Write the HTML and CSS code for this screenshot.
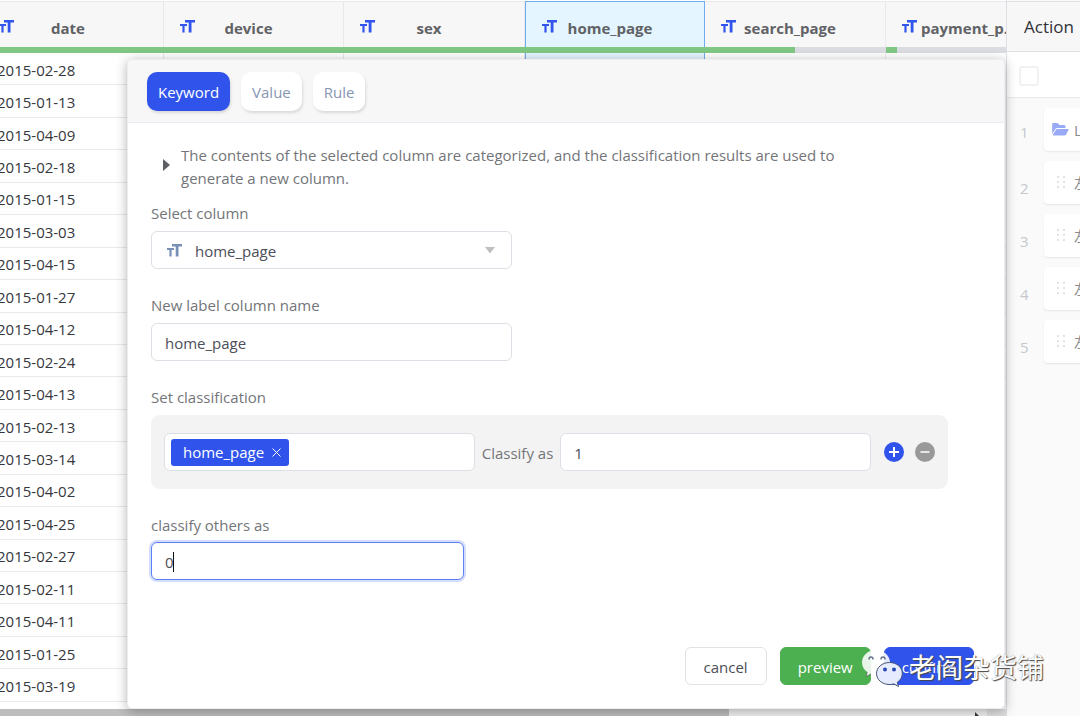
FILE: index.html
```
<!DOCTYPE html>
<html lang="en">
<head>
<meta charset="utf-8">
<title>Column classification</title>
<link rel="stylesheet" href="styles.css">
</head>
<body>
<svg class="sprite" aria-hidden="true">
  <symbol id="type-icon" viewBox="0 0 15 13"><path d="M0 4h7v2H4.600v6.500H2.400V6H0zM5 0h10v2.600h-3.500v9.900H8.700V2.600H5z" fill="currentColor"/></symbol>
  <symbol id="grip-icon" viewBox="0 0 9 13"><path d="M0 0h2v2H0zM6 0h2v2H6zM0 5h2v2H0zM6 5h2v2H6zM0 10h2v2H0zM6 10h2v2H6z" fill="currentColor"/></symbol>
</svg>
<div class="app">
  <main class="sheet">
    <div class="sheet-view">
      <table class="grid">
        <colgroup><col class="wide"><col><col class="wide"><col><col class="wide"><col></colgroup>
        <thead><tr>
          <th><div class="head"><svg class="type"><use href="#type-icon"/></svg><span>date</span></div><div class="bar full"></div></th>
          <th><div class="head"><svg class="type"><use href="#type-icon"/></svg><span>device</span></div><div class="bar full"></div></th>
          <th><div class="head"><svg class="type"><use href="#type-icon"/></svg><span>sex</span></div><div class="bar full"></div></th>
          <th class="selected"><div class="head"><svg class="type"><use href="#type-icon"/></svg><span>home_page</span></div><div class="bar full"></div></th>
          <th><div class="head"><svg class="type"><use href="#type-icon"/></svg><span>search_page</span></div><div class="bar half"></div></th>
          <th><div class="head"><svg class="type"><use href="#type-icon"/></svg><span>payment_page</span></div><div class="bar few"></div></th>
        </tr></thead>
        <tbody>
          <tr><td>2015-02-28</td><td></td><td></td><td class="selected"></td><td></td><td></td></tr>
          <tr><td>2015-01-13</td><td></td><td></td><td class="selected"></td><td></td><td></td></tr>
          <tr><td>2015-04-09</td><td></td><td></td><td class="selected"></td><td></td><td></td></tr>
          <tr><td>2015-02-18</td><td></td><td></td><td class="selected"></td><td></td><td></td></tr>
          <tr><td>2015-01-15</td><td></td><td></td><td class="selected"></td><td></td><td></td></tr>
          <tr><td>2015-03-03</td><td></td><td></td><td class="selected"></td><td></td><td></td></tr>
          <tr><td>2015-04-15</td><td></td><td></td><td class="selected"></td><td></td><td></td></tr>
          <tr><td>2015-01-27</td><td></td><td></td><td class="selected"></td><td></td><td></td></tr>
          <tr><td>2015-04-12</td><td></td><td></td><td class="selected"></td><td></td><td></td></tr>
          <tr><td>2015-02-24</td><td></td><td></td><td class="selected"></td><td></td><td></td></tr>
          <tr><td>2015-04-13</td><td></td><td></td><td class="selected"></td><td></td><td></td></tr>
          <tr><td>2015-02-13</td><td></td><td></td><td class="selected"></td><td></td><td></td></tr>
          <tr><td>2015-03-14</td><td></td><td></td><td class="selected"></td><td></td><td></td></tr>
          <tr><td>2015-04-02</td><td></td><td></td><td class="selected"></td><td></td><td></td></tr>
          <tr><td>2015-04-25</td><td></td><td></td><td class="selected"></td><td></td><td></td></tr>
          <tr><td>2015-02-27</td><td></td><td></td><td class="selected"></td><td></td><td></td></tr>
          <tr><td>2015-02-11</td><td></td><td></td><td class="selected"></td><td></td><td></td></tr>
          <tr><td>2015-04-11</td><td></td><td></td><td class="selected"></td><td></td><td></td></tr>
          <tr><td>2015-01-25</td><td></td><td></td><td class="selected"></td><td></td><td></td></tr>
          <tr><td>2015-03-19</td><td></td><td></td><td class="selected"></td><td></td><td></td></tr>
        </tbody>
      </table>
    </div>
    <div class="scroll"><div class="thumb"></div><div class="corner"></div></div>
  </main>

  <aside class="actions">
    <h2>Action</h2>
    <div class="check-row"><input type="checkbox" aria-label="Select all actions"></div>
    <ol>
      <li><span class="num first">1</span><div class="card source"><svg class="folder" viewBox="0 0 17 13"><path d="M1 0h4.500l2 2H12q1.500 0 1.500 1.500V5H5.500Q4 5 3.300 6.200L.2 11V1Q.2 0 1 0zM5.500 6H16q1 0 .5 1l-2.600 4.700q-.4.800-1.300.8H1.500q-1 0-.5-1l3-4.700Q4.500 6 5.500 6z" fill="currentColor"/></svg><span>L</span></div></li>
      <li><span class="num">2</span><div class="card"><svg class="grip"><use href="#grip-icon"/></svg><span>左</span></div></li>
      <li><span class="num">3</span><div class="card"><svg class="grip"><use href="#grip-icon"/></svg><span>左</span></div></li>
      <li><span class="num">4</span><div class="card"><svg class="grip"><use href="#grip-icon"/></svg><span>左</span></div></li>
      <li><span class="num">5</span><div class="card"><svg class="grip"><use href="#grip-icon"/></svg><span>左</span></div></li>
    </ol>
  </aside>

  <form class="dialog">
    <div class="tabs">
      <button type="button" class="tab active">Keyword</button>
      <button type="button" class="tab">Value</button>
      <button type="button" class="tab">Rule</button>
    </div>
    <div class="body">
      <div class="intro">
        <svg class="caret" viewBox="0 0 7 12"><path d="M0 0l7 6-7 6z" fill="currentColor"/></svg>
        <p>The contents of the selected column are categorized, and the classification results are used to generate a new column.</p>
      </div>
      <div class="field">
        <label for="column">Select column</label>
        <div class="control picker">
          <svg class="type"><use href="#type-icon"/></svg>
          <select id="column"><option>home_page</option></select>
          <svg class="arrow" viewBox="0 0 10 7"><path d="M0 0h10L5 6.500z" fill="currentColor"/></svg>
        </div>
      </div>
      <div class="field">
        <label for="name">New label column name</label>
        <input class="control" id="name" type="text" value="home_page">
      </div>
      <div class="field rules">
        <label for="keyword">Set classification</label>
        <div class="rule">
          <div class="control tags"><span class="tag">home_page<button type="button" aria-label="Remove home_page"><svg viewBox="0 0 9 9"><path d="M.5.5l8 8M8.500.5l-8 8" stroke="currentColor"/></svg></button></span><input id="keyword" type="text"></div>
          <label for="class">Classify as</label>
          <input class="control" id="class" type="text" value="1">
          <div class="round-group">
            <button type="button" class="round add" aria-label="Add"><svg viewBox="0 0 20 20"><path d="M10 5v10M5 10h10" stroke="currentColor" stroke-width="2"/></svg></button>
            <button type="button" class="round" aria-label="Remove"><svg viewBox="0 0 20 20"><path d="M5.500 10h9" stroke="currentColor" stroke-width="1.500"/></svg></button>
          </div>
        </div>
      </div>
      <div class="field others">
        <label for="others">classify others as</label>
        <div class="control focused"><input id="others" type="text" size="1" value="0"><span class="text-caret"></span></div>
      </div>
    </div>
    <div class="footer">
      <button type="button" class="btn">cancel</button>
      <button type="button" class="btn preview">preview</button>
      <button type="submit" class="btn confirm">confirm</button>
    </div>
  </form>

  <svg class="pointer" viewBox="0 0 8 12"><path d="M1 0v11l7-4z" fill="#333"/></svg>
  <div class="watermark">
    <svg viewBox="0 0 42 38"><path d="M15 1C7 1 1 6.500 1 13.500c0 4 2 7.300 5.300 9.600L5 27.500l5-2.600c1.600.5 3.300.7 5 .7C23 25.500 29 20 29 13.500S23 1 15 1z" fill="#fff" fill-opacity=".88"/><path d="M6.300 23.100L5 27.500l5-2.600" fill="none" stroke="#555" stroke-opacity=".6"/><path d="M8 10.500q0-2.500 2-2.500t2 2.500M20 10.500q0-2.500 2-2.500t2 2.500" fill="none" stroke="#69758e" stroke-width="1.500"/><path d="M28.500 13.500C21 13.500 15.500 18.500 15.500 24.500S21 35.500 28.500 35.500c1.500 0 3-.2 4.300-.6l4.700 2.600-1.200-4.200c3.100-2 5-5.200 5-8.800 0-6-5.300-11-12.800-11z" fill="#e6ebff" stroke="#435172"/><circle cx="24" cy="20.500" r="2" fill="#2949b7"/><circle cx="33" cy="20.500" r="2" fill="#2949b7"/></svg>
    <span>老阎杂货铺</span>
  </div>
</div>
</body>
</html>
```
FILE: styles.css
```
* { box-sizing: border-box; }
body { margin: 0; font: 15px "Open Sans", "Noto Sans CJK SC", sans-serif; color: #4c4e55; background: #fff; }
button, input, select { font: inherit; color: inherit; }
button { cursor: pointer; }
.sprite { display: none; }
.app { position: relative; display: flex; height: 100vh; overflow: hidden; }

.sheet { flex: 1; min-width: 0; display: flex; flex-direction: column; }
.sheet-view { flex: 1; min-height: 0; padding: 1px 0 7px; overflow: hidden; }
.grid { width: 1083px; height: 100%; margin-left: -17px; table-layout: fixed; border-collapse: separate; border-spacing: 0; }
.grid col { width: 180px; }
.grid col.wide { width: 181px; }
.grid th { height: 52px; padding: 0; background: #f7f7f7; border: solid #e9e9ec; border-width: 1px 1px 0 0; }
.head { display: flex; align-items: center; gap: 4px; height: 45px; padding: 6px 45px 0 16px; font-weight: 700; color: #606266; }
.head span { flex: 1; overflow: hidden; text-overflow: ellipsis; white-space: nowrap; text-align: center; }
.type { flex: none; width: 15px; height: 13px; color: #3155ed; }
.head .type { margin-bottom: 2px; }
.bar { height: 6px; background: #dadce1; margin-right: -1px; }
.bar.full { background: #81c784; }
.bar.half { background: linear-gradient(90deg, #81c784 50%, #dadce1 50%); }
.bar.few { background: linear-gradient(90deg, #81c784 6%, #dadce1 6%); }
.grid td { padding: 2px 14px 0; line-height: 20px; border: solid #e9e9ec; border-width: 0 1px 1px 0; color: #35373d; }
.grid .selected { background: #e4f5ff; border-left: 1px solid #70abed; border-right-color: #70abed; }
.grid th.selected { border-top-color: #70abed; }
.grid th.selected .bar { margin-left: -1px; }
.scroll { display: flex; justify-content: space-between; height: 7px; background: #eee; }
.thumb { width: 729px; background: #bdbdbd; }
.corner { width: 19px; background: #dedede; }

.actions { width: 74px; padding-top: 1px; overflow: hidden; background: #fafafa; border-left: 1px solid #dfe0e5; }
.actions h2 { height: 51px; margin: 0; padding: 2px 0 0 17px; border: solid #dfe0e5; border-width: 1px 0; background: #f7f7f7; font-size: 17px; font-weight: 400; line-height: 46px; color: #303238; }
.check-row { display: flex; align-items: center; height: 46px; padding: 2px 0 0 12px; background: #fff; border-bottom: 1px solid #e8e8ea; }
.check-row input { appearance: none; width: 20px; height: 20px; margin: 0; border: 2px solid #f1f1f2; border-radius: 3px; }
.actions ol { display: grid; gap: 10px; margin: 0; padding: 10px 0; list-style: none; }
.actions li { display: flex; align-items: center; height: 43px; }
.num { flex: none; width: 37px; padding: 10px 0 0 13px; color: #c5c8ce; }
.num.first { padding-top: 4px; }
.card { display: flex; flex: none; align-items: center; gap: 8px; width: 160px; height: 43px; padding-left: 8px; border-radius: 4px; background: #fff; box-shadow: 0 1px 2px #e6e6e6; color: #8c8c8c; }
.card.source { gap: 5px; }
.folder { width: 17px; height: 13px; color: #98a9f6; }
.grip { width: 9px; height: 13px; margin-left: 5px; color: #e2e2e2; }

.dialog { position: absolute; inset: 59px 75px 7px 127px; display: flex; flex-direction: column; border: 1px solid #ececf2; border-radius: 5px; background: #fff; box-shadow: 0 2px 12px rgba(0, 0, 0, .3); overflow: hidden; }
.tabs { display: flex; gap: 11px; padding: 12px 19px 11px; background: #f7f7f7; border-bottom: 1px solid #ebecf3; }
.tab { height: 39px; padding: 0 11px; border: 0; border-radius: 10px; background: #fff; color: #8896b4; box-shadow: 1px 2px 3px rgba(0, 0, 0, .12); }
.tab.active { background: #3054eb; color: #fff; }
.body { flex: 1; padding: 21px 56px 0 23px; color: #737579; }
.intro { display: flex; align-items: center; gap: 11px; padding-left: 12px; margin-bottom: 13px; }
.caret { flex: none; width: 7px; height: 12px; margin-bottom: 4px; color: #5d5f64; }
.intro p { margin: 0; max-width: 680px; line-height: 23px; }
.field { display: grid; gap: 8px; max-width: 361px; margin-bottom: 26px; }
.field label { line-height: 20px; }
.field.rules { max-width: none; }
.field.others { gap: 7px; max-width: 313px; }
.control { width: 100%; height: 38px; padding: 2px 13px 0; border: 1px solid #dedfe6; border-radius: 6px; background: #fff; color: #4c4e58; outline: 0; }
.picker { display: flex; align-items: center; gap: 13px; padding: 0 16px 0 15px; }
.picker .type { color: #7890b5; }
.picker select { flex: 1; padding: 2px 0 0; border: 0; appearance: none; background: transparent; outline: 0; }
.arrow { width: 10px; height: 7px; color: #bfbfbf; }
.rule { display: flex; align-items: center; gap: 7px; padding: 18px 13px; border-radius: 9px; background: #f3f3f3; }
.rule .control { flex: 1 1 200px; min-width: 0; }
.rule label { padding-top: 2px; white-space: nowrap; }
.tags { display: flex; align-items: center; padding: 0 6px; }
.tags input { flex: 1; min-width: 0; border: 0; outline: 0; background: transparent; }
.tag { display: flex; align-items: center; gap: 8px; height: 27px; padding: 0 8px 0 12px; border-radius: 3px; background: #3054eb; color: #fff; }
.tag button { display: flex; padding: 0; border: 0; background: none; }
.tag svg { width: 9px; height: 9px; }
.round-group { display: flex; gap: 11px; padding-left: 6px; }
.round { display: flex; width: 20px; height: 20px; padding: 0; border: 0; border-radius: 50%; background: #999; color: #fff; }
.round.add { background: #3054eb; }
.focused { display: flex; align-items: center; border-color: #5c80f5; box-shadow: 0 0 0 2px #d5ddfc; }
.focused input { width: 8px; padding: 0; border: 0; outline: 0; }
.text-caret { width: 1px; height: 20px; background: #111; }
.footer { display: flex; justify-content: flex-end; gap: 13px; padding: 0 30px 23px; }
.btn { height: 38px; padding: 2px 18px 0; border: 1px solid #e1e2e8; border-radius: 6px; background: #fff; }
.btn.preview { padding: 2px 17px 0; border-color: #4caf50; background: #4caf50; color: #fff; }
.btn.confirm { padding: 2px 17px 0; border-color: #3054eb; background: #3054eb; color: #fff; }

.pointer { position: absolute; right: 98px; bottom: -8px; width: 8px; height: 12px; }
.watermark { position: absolute; right: 36px; bottom: 29px; display: flex; align-items: center; gap: 6px; font-size: 27px; line-height: 38px; color: #fff; text-shadow: 1px 1px 1px #444, 0 0 1px #777; pointer-events: none; }
.watermark svg { width: 42px; height: 38px; }
```
